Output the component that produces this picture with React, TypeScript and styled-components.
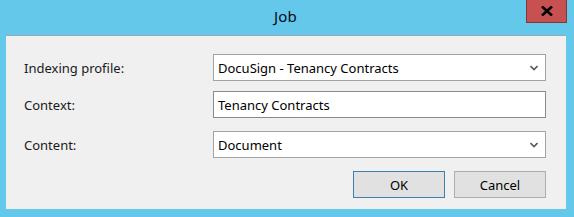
import React from "react";
import styled, { createGlobalStyle } from "styled-components";

const Global = createGlobalStyle`
  html, body { margin: 0; padding: 0; }
  body { background: #63c8e9; }
`;

const Window = styled.div`
  width: 574px;
  height: 217px;
  background: #63c8e9;
  display: flex;
  flex-direction: column;
  font-family: "Noto Sans", "Open Sans", sans-serif;
  font-size: 13px;
  color: #000;
  box-sizing: border-box;
`;

const TitleBar = styled.div`
  height: 35px;
  display: grid;
  grid-template-columns: 1fr auto 1fr;
  align-items: start;
`;

const Title = styled.div`
  grid-column: 2;
  padding-top: 6px;
  margin-right: 3px;
  font-size: 15px;
  color: #0a0a1a;
  letter-spacing: 0.2px;
`;

const CloseButton = styled.div`
  grid-column: 3;
  justify-self: end;
  margin-right: 7px;
  width: 41px;
  height: 23px;
  box-sizing: border-box;
  background: #c75050;
  border: 1px solid #7e3a3a;
  border-top: none;
  display: flex;
  align-items: center;
  justify-content: center;
`;

const Client = styled.div`
  flex: 1;
  margin: 0 8px 8px 6px;
  background: #f0f0f0;
  border-top: 1px solid #9aa8b0;
  padding: 18px 20px 0 18px;
  display: flex;
  flex-direction: column;
`;

const Row = styled.div<{ $gap: number }>`
  display: grid;
  grid-template-columns: 189px 1fr;
  align-items: center;
  margin-bottom: ${(p) => p.$gap}px;
`;

const Label = styled.div`
  color: #1a1a1a;
`;

const FieldBox = styled.div<{ $dark?: boolean }>`
  height: 27px;
  box-sizing: border-box;
  background: #fff;
  border: 1px solid ${(p) => (p.$dark ? "#8a8a8a" : "#a3a3a3")};
  display: flex;
  align-items: center;
  padding: 0 7px 0 4px;
  color: #000;
`;

const FieldText = styled.span`
  flex: 1;
`;

const Buttons = styled.div`
  display: flex;
  justify-content: flex-end;
  gap: 9px;
`;

const Button = styled.div<{ $default?: boolean }>`
  width: 92px;
  height: 27px;
  box-sizing: border-box;
  background: #e1e1e1;
  border: 1px solid ${(p) => (p.$default ? "#3c7fb1" : "#adadad")};
  display: flex;
  align-items: center;
  justify-content: center;
  color: #000;
`;

const Chevron = () => (
  <svg width="8" height="6" viewBox="0 0 8 6">
    <path d="M0.5 1 L4 4.5 L7.5 1" fill="none" stroke="#5a5a5a" strokeWidth="1.6" />
  </svg>
);

const CloseX = () => (
  <svg width="12" height="10" viewBox="0 0 12 10">
    <path d="M1 0.5 L11 9.5 M11 0.5 L1 9.5" stroke="#000" strokeWidth="2.6" />
  </svg>
);

export default function App() {
  return (
    <>
      <Global />
      <Window>
        <TitleBar>
          <Title>Job</Title>
          <CloseButton>
            <CloseX />
          </CloseButton>
        </TitleBar>
        <Client>
          <Row $gap={10}>
            <Label>Indexing profile:</Label>
            <FieldBox>
              <FieldText>DocuSign - Tenancy Contracts</FieldText>
              <Chevron />
            </FieldBox>
          </Row>
          <Row $gap={13}>
            <Label>Context:</Label>
            <FieldBox $dark>
              <FieldText>Tenancy Contracts</FieldText>
            </FieldBox>
          </Row>
          <Row $gap={13}>
            <Label>Content:</Label>
            <FieldBox>
              <FieldText>Document</FieldText>
              <Chevron />
            </FieldBox>
          </Row>
          <Buttons>
            <Button $default>OK</Button>
            <Button>Cancel</Button>
          </Buttons>
        </Client>
      </Window>
    </>
  );
}
